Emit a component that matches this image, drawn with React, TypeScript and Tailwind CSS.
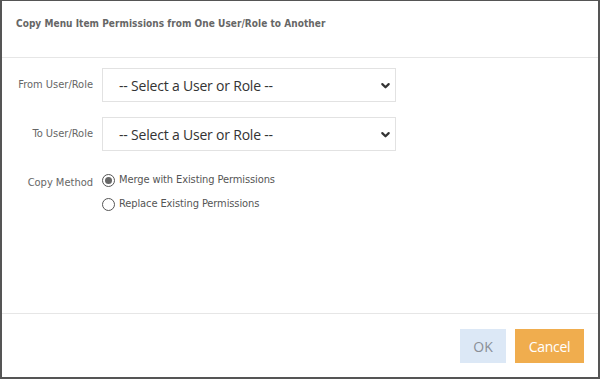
import React from "react";

function Chevron() {
  return (
    <svg className="w-[11px] h-[11px] text-[#333]" viewBox="0 0 12 12" fill="none" stroke="currentColor" strokeWidth="2.4" strokeLinecap="round" strokeLinejoin="round">
      <path d="M2.5 4.5L6 8l3.5-3.5" />
    </svg>
  );
}

function SelectBox() {
  return (
    <div className="w-[294px] h-[34px] border border-[#e2e2e2] flex items-center justify-between pl-[16px] pr-[4px] bg-white">
      <span className="text-[14px] text-[#333] font-['Open_Sans',sans-serif] tracking-[-0.2px]">-- Select a User or Role --</span>
      <Chevron />
    </div>
  );
}

function Radio({ checked, label }: { checked?: boolean; label: string }) {
  return (
    <div className="flex items-center gap-[4px] h-[24px]">
      <span className="w-[13px] h-[13px] rounded-full border border-[#555] flex items-center justify-center bg-white">
        {checked && <span className="w-[7px] h-[7px] rounded-full bg-[#666]" />}
      </span>
      <span className="text-[11px] text-[#555] font-['DejaVu_Sans_Condensed','DejaVu_Sans',sans-serif] tracking-[-0.1px]">{label}</span>
    </div>
  );
}

export default function App() {
  const labelCls = "w-[91px] text-right text-[11px] text-[#666] font-['DejaVu_Sans_Condensed','DejaVu_Sans',sans-serif]";
  return (
    <div className="w-[600px] h-[379px] bg-white border-[#555] border-x-2 border-b-2 border-t flex flex-col">
      <div className="h-[57px] border-b border-[#e6e6e6] flex items-start pt-[15px] pl-[14px] shrink-0">
        <span className="text-[10px] font-bold text-[#666] tracking-[0.05px] font-['DejaVu_Sans_Condensed','DejaVu_Sans',sans-serif]">
          Copy Menu Item Permissions from One User/Role to Another
        </span>
      </div>
      <div className="flex-1 flex flex-col pt-[10px] gap-[15px]">
        <div className="flex items-center gap-[9px]">
          <div className={labelCls}>From User/Role</div>
          <SelectBox />
        </div>
        <div className="flex items-center gap-[9px]">
          <div className={labelCls}>To User/Role</div>
          <SelectBox />
        </div>
        <div className="flex items-start gap-[9px] pt-[2px]">
          <div className={labelCls + " pt-[7px]"}>Copy Method</div>
          <div className="flex flex-col">
            <Radio checked label="Merge with Existing Permissions" />
            <Radio label="Replace Existing Permissions" />
          </div>
        </div>
      </div>
      <div className="h-[64px] border-t border-[#e6e6e6] flex items-start pt-[15px] justify-end gap-[9px] pr-[14px] shrink-0">
        <button className="w-[46px] h-[34px] bg-[#dce8f6] text-[#8a8f96] text-[14px] font-['Open_Sans',sans-serif]">OK</button>
        <button className="w-[69px] h-[34px] bg-[#f0ad4e] text-white text-[14px] font-['Open_Sans',sans-serif] tracking-[-0.3px]">Cancel</button>
      </div>
    </div>
  );
}
